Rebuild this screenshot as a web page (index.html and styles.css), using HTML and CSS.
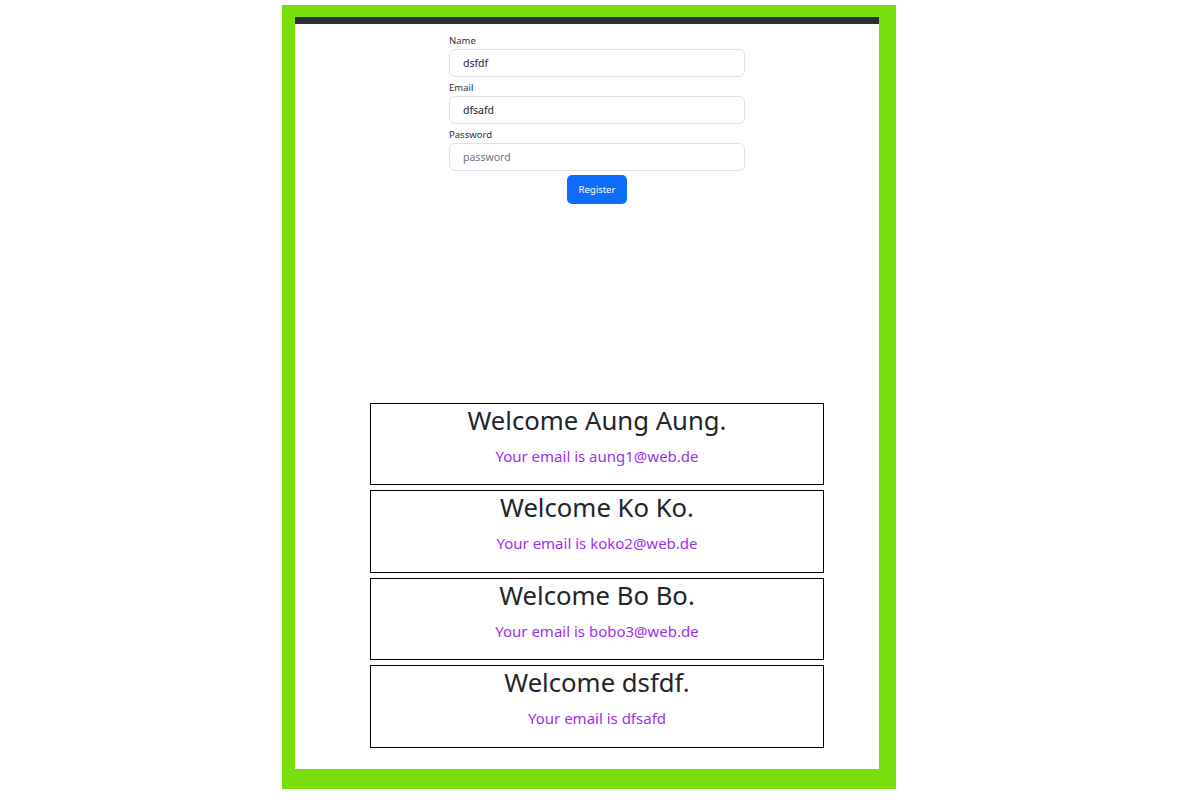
FILE: index.html
```html
<!DOCTYPE html>
<html lang="en">
<head>
<meta charset="utf-8">
<title>Register</title>
<link rel="stylesheet" href="styles.css">
</head>
<body>
<div class="frame">
  <div class="topbar"></div>
  <div class="content">
    <form class="reg-form">
      <label class="lbl">Name</label>
      <div class="field">dsfdf</div>
      <label class="lbl">Email</label>
      <div class="field">dfsafd</div>
      <label class="lbl">Password</label>
      <div class="field placeholder">password</div>
      <div class="btn-row"><button type="button" class="btn">Register</button></div>
    </form>
    <div class="cards">
      <div class="card">
        <h2 class="card-title">Welcome Aung Aung.</h2>
        <p class="card-email">Your email is aung1@web.de</p>
      </div>
      <div class="card">
        <h2 class="card-title">Welcome Ko Ko.</h2>
        <p class="card-email">Your email is koko2@web.de</p>
      </div>
      <div class="card">
        <h2 class="card-title">Welcome Bo Bo.</h2>
        <p class="card-email">Your email is bobo3@web.de</p>
      </div>
      <div class="card">
        <h2 class="card-title">Welcome dsfdf.</h2>
        <p class="card-email">Your email is dfsafd</p>
      </div>
    </div>
  </div>
</div>
</body>
</html>
```
FILE: styles.css
```css
* { box-sizing: border-box; }
html, body { margin: 0; padding: 0; background: #fff; }
body {
  font-family: "Noto Sans", "Open Sans", sans-serif;
  color: #212529;
  padding: 5px 0 0 282px;
}
.frame {
  width: 614px;
  height: 784px;
  background: #fff;
  border-style: solid;
  border-color: #7ade0e;
  border-width: 12px 17px 20px 13px;
  display: flex;
  flex-direction: column;
}
.topbar {
  height: 7px;
  background: #303033;
}
.content {
  flex: 1;
  display: flex;
  flex-direction: column;
  align-items: center;
  padding: 10px 0 0 20px;
}
.reg-form {
  width: 296px;
  display: flex;
  flex-direction: column;
  margin: 0;
}
.lbl {
  font-size: 9.5px;
  line-height: 13px;
  height: 13px;
  margin-bottom: 2px;
  color: #2b2f33;
}
.field {
  height: 28px;
  border: 1px solid #dee2e6;
  border-radius: 6px;
  padding: 0 13px;
  font-size: 10.5px;
  line-height: 26px;
  color: #212529;
  margin-bottom: 4px;
}
.field.placeholder { color: #6c757d; }
.btn-row {
  display: flex;
  justify-content: center;
}
.btn {
  width: 60px;
  height: 29px;
  border: none;
  border-radius: 5px;
  background: #0d6efd;
  color: #fff;
  font-family: inherit;
  font-size: 9.5px;
  padding: 0;
}
.cards {
  margin-top: 199px;
  display: flex;
  flex-direction: column;
  gap: 5px;
}
.card {
  width: 454px;
  height: 82.4px;
  border: 1px solid #000;
  text-align: center;
}
.card-title {
  margin: 0;
  font-weight: 400;
  font-size: 25.7px;
  line-height: 34px;
}
.card-email {
  margin: 8px 0 0;
  font-size: 15px;
  line-height: 20px;
  color: #9b30f0;
}
```
